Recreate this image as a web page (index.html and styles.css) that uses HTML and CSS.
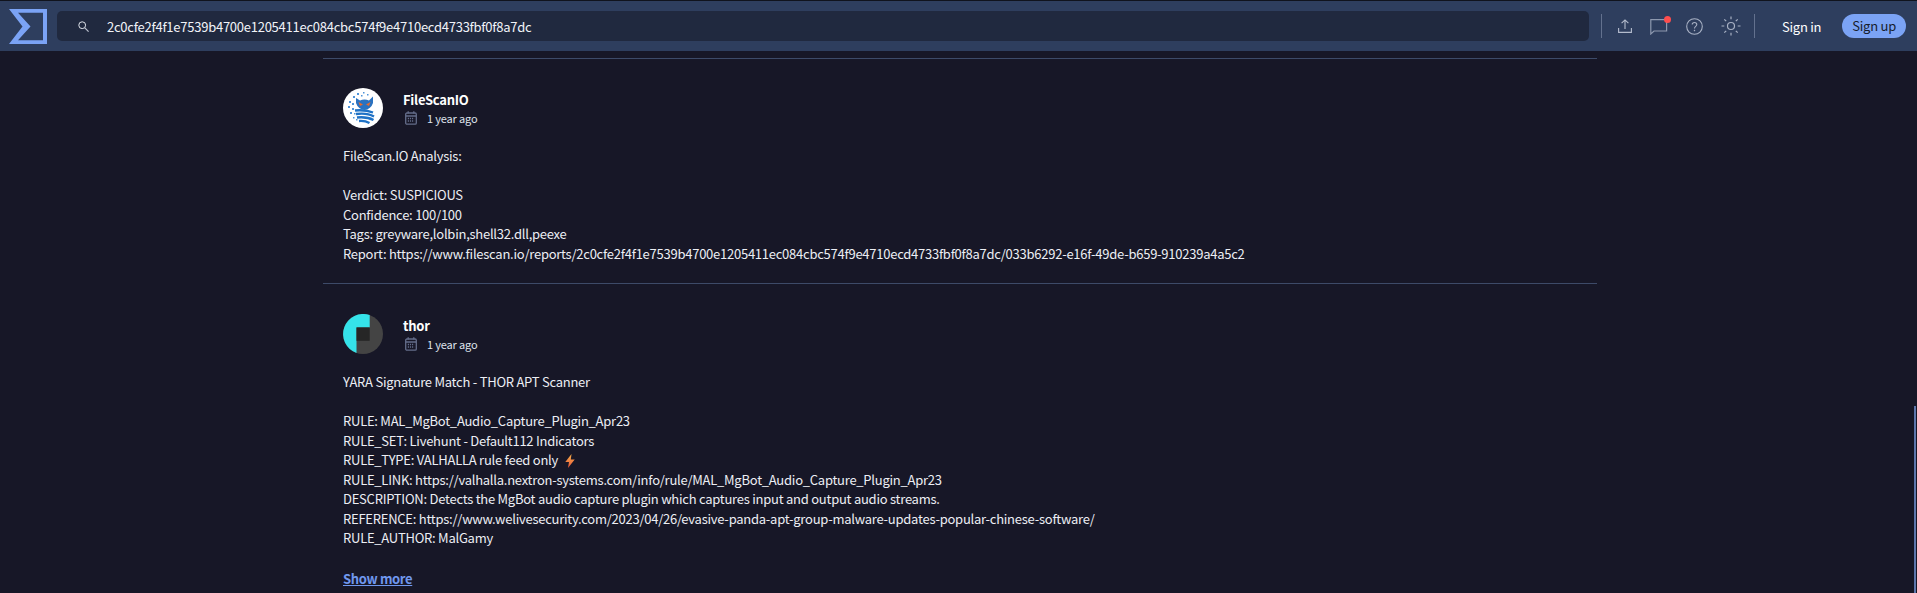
FILE: index.html
```html
<!DOCTYPE html>
<html lang="en">
<head>
    <meta charset="UTF-8">
    <title>VirusTotal</title>
    <link rel="stylesheet" href="styles.css">
</head>
<body>
    <header class="topbar">
        <svg class="logo" viewBox="0 0 38 35" width="38" height="35">
            <path fill-rule="evenodd" d="M0 0 H38 V35 H0 L13.5 17.5 Z M9 3.7 L21.5 17.5 L9 31.3 H34 V3.7 Z" fill="#7ba3f5"/>
        </svg>
        <div class="search">
            <svg class="search-icon" viewBox="0 0 11 11" width="11" height="11">
                <circle cx="4.2" cy="4.2" r="3.4" fill="none" stroke="#dfe3ea" stroke-width="1"/>
                <path d="M6.8 6.8 L10.6 10.6" stroke="#b9bfcc" stroke-width="1.2"/>
            </svg>
            <span class="search-text">2c0cfe2f4f1e7539b4700e1205411ec084cbc574f9e4710ecd4733fbf0f8a7dc</span>
        </div>
        <div class="divider"></div>
        <div class="tools">
            <svg viewBox="0 0 14 14" width="14" height="14" fill="none" stroke="#b4bccd" stroke-width="1.1">
                <path d="M7 10 V1 M3.6 4.2 L7 .9 L10.4 4.2 M.6 9 V13.4 H13.4 V9"/>
            </svg>
            <div class="chat">
                <svg viewBox="0 0 18 17" width="18" height="17" fill="none" stroke="#8d98ae" stroke-width="1.2">
                    <path d="M.8 1.6 H16.6 V13 H4 L.8 16 Z"/>
                </svg>
                <span class="dot"></span>
            </div>
            <svg viewBox="0 0 17 17" width="17" height="17" fill="none" stroke="#a8b1c4" stroke-width="1.1">
                <circle cx="8.5" cy="8.5" r="7.8"/>
                <path d="M6.2 6.6 C6.2 3.8 10.8 3.8 10.8 6.6 C10.8 8.4 8.5 8.4 8.5 10.4"/>
                <path d="M8.5 11.8 V13.2" stroke-width="1.3"/>
            </svg>
            <svg viewBox="0 0 20 20" width="20" height="20" fill="none" stroke="#a8b1c4" stroke-width="1.2">
                <circle cx="10" cy="10" r="3.5"/>
                <path d="M10 .5 V3.3 M10 16.7 V19.5 M.5 10 H3.3 M16.7 10 H19.5 M3.3 3.3 L5.2 5.2 M14.8 14.8 L16.7 16.7 M3.3 16.7 L5.2 14.8 M14.8 5.2 L16.7 3.3"/>
            </svg>
        </div>
        <div class="divider divider-right"></div>
        <a class="signin">Sign in</a>
        <a class="signup">Sign up</a>
    </header>

    <main class="comments">
        <article class="comment comment-first">
            <div class="comment-head">
                <svg class="avatar" viewBox="0 0 40 40" width="40" height="40">
                    <circle cx="20" cy="20" r="20" fill="#fff"/>
                    <path d="M13 10 L17 12.5 Q21.5 10.5 26 12.5 L30 8.5 L30 15 Q28 21 21.5 22 Q15 21 13 15 Z" fill="#2a72c0"/>
                    <path d="M15.5 14 L20 16.5 L17 18 Z M27.5 14 L23 16.5 L26 18 Z" fill="#ea6a2e"/>
                    <path d="M12 22.5 Q22 21.5 30 24.5 M13 26 Q24 24.5 31 28.5 M14 29.5 Q24 28.5 30.5 32 M16 33 Q22 32.5 26.5 35" fill="none" stroke="#1f72c6" stroke-width="2.4"/>
                    <path d="M10 8 h2 v2 h-2 z M6 13 h2 v2 h-2 z M9 15 h2 v2 h-2 z M5 18 h2 v2 h-2 z M9 20 h2 v2 h-2 z M7 24 h2 v2 h-2 z M11 25 h1.5 v1.5 h-1.5 z M10 29 h1.5 v1.5 h-1.5 z M13 31 h1.5 v1.5 h-1.5 z M14 5 h2 v2 h-2 z M18 7 h1.5 v1.5 h-1.5 z M20 4 h1.5 v1.5 h-1.5 z M24 6 h1.5 v1.5 h-1.5 z" fill="#4f93d8"/>
                </svg>
                <div class="meta">
                    <div class="author">FileScanIO</div>
                    <div class="date">
                        <svg viewBox="0 0 12 14" width="12" height="14" fill="none" stroke="#646d8a" stroke-width="1.3">
                            <rect x=".7" y="2" width="10.6" height="11.2" rx="1.2"/>
                            <path d="M.7 5 H11.3 M3.2 .3 V2.5 M8.8 .3 V2.5"/>
                            <path d="M2.8 7.5 H9.2 M2.8 10 H9.2" stroke-dasharray="1.2 .9"/>
                        </svg>
                        <span>1 year ago</span>
                    </div>
                </div>
            </div>
            <div class="comment-body">
                <p>FileScan.IO Analysis:</p>
                <p class="blank"></p>
                <p>Verdict: SUSPICIOUS</p>
                <p>Confidence: 100/100</p>
                <p>Tags: greyware,lolbin,shell32.dll,peexe</p>
                <p>Report: https://www.filescan.io/reports/2c0cfe2f4f1e7539b4700e1205411ec084cbc574f9e4710ecd4733fbf0f8a7dc/033b6292-e16f-49de-b659-910239a4a5c2</p>
            </div>
        </article>

        <article class="comment">
            <div class="comment-head">
                <svg class="avatar" viewBox="0 0 40 40" width="40" height="40">
                    <circle cx="20" cy="20" r="20" fill="#444"/>
                    <path d="M26.7 1.1 A20 20 0 0 0 13.5 38.9 V13.4 H26.7 Z" fill="#35e3ea"/>
                    <rect x="13.5" y="13.4" width="13.2" height="13.4" fill="#262626"/>
                </svg>
                <div class="meta">
                    <div class="author">thor</div>
                    <div class="date">
                        <svg viewBox="0 0 12 14" width="12" height="14" fill="none" stroke="#646d8a" stroke-width="1.3">
                            <rect x=".7" y="2" width="10.6" height="11.2" rx="1.2"/>
                            <path d="M.7 5 H11.3 M3.2 .3 V2.5 M8.8 .3 V2.5"/>
                            <path d="M2.8 7.5 H9.2 M2.8 10 H9.2" stroke-dasharray="1.2 .9"/>
                        </svg>
                        <span>1 year ago</span>
                    </div>
                </div>
            </div>
            <div class="comment-body">
                <p>YARA Signature Match - THOR APT Scanner</p>
                <p class="blank"></p>
                <p>RULE: MAL_MgBot_Audio_Capture_Plugin_Apr23</p>
                <p>RULE_SET: Livehunt - Default112 Indicators</p>
                <p>RULE_TYPE: VALHALLA rule feed only <svg class="bolt" viewBox="0 0 10 14" width="10" height="14"><defs><linearGradient id="boltFill" x1="0" y1="0" x2="0" y2="1"><stop offset="0" stop-color="#f7b24a"/><stop offset="1" stop-color="#e8553a"/></linearGradient></defs><path d="M6.5 0 L0.3 8 H4 L3 14 L9.7 5.5 H5.8 Z" fill="url(#boltFill)"/></svg></p>
                <p>RULE_LINK: https://valhalla.nextron-systems.com/info/rule/MAL_MgBot_Audio_Capture_Plugin_Apr23</p>
                <p>DESCRIPTION: Detects the MgBot audio capture plugin which captures input and output audio streams.</p>
                <p>REFERENCE: https://www.welivesecurity.com/2023/04/26/evasive-panda-apt-group-malware-updates-popular-chinese-software/</p>
                <p>RULE_AUTHOR: MalGamy</p>
                <a class="show-more">Show more</a>
            </div>
        </article>
    </main>

    <div class="scroll-thumb"></div>
</body>
</html>
```

FILE: styles.css
```css
* {
    box-sizing: border-box;
    margin: 0;
    padding: 0;
}
body {
    background: #171727;
    color: #eceef4;
    font-family: "Noto Sans CJK JP", "Noto Sans", sans-serif;
    font-size: 13px;
    letter-spacing: -0.25px;
    height: 593px;
    overflow: hidden;
}
.topbar {
    display: flex;
    align-items: center;
    height: 51px;
    background: #2e3e5e;
    border-top: 1px solid #10131d;
    padding-left: 9px;
}
.logo {
    flex: none;
    margin-right: 10px;
}
.search {
    flex: none;
    display: flex;
    align-items: center;
    width: 1532px;
    height: 30px;
    background: #20293f;
    border-radius: 5px;
    padding-left: 21px;
}
.search-icon {
    margin-right: 18px;
}
.search-text {
    color: #f1f3f8;
}
.divider {
    flex: none;
    width: 1px;
    height: 24px;
    background: #63718e;
    margin-left: 12px;
}
.tools {
    display: flex;
    align-items: center;
    gap: 18px;
    margin-left: 16px;
}
.chat {
    position: relative;
    height: 17px;
}
.dot {
    position: absolute;
    top: -2px;
    right: -3px;
    width: 7px;
    height: 7px;
    border-radius: 50%;
    background: #ff4d4d;
}
.divider-right {
    margin-left: 13px;
}
.signin {
    color: #fff;
    margin-left: 27px;
    white-space: nowrap;
}
.signup {
    background: #7ba3f5;
    color: #171d2c;
    height: 24px;
    line-height: 23px;
    padding: 0 10px;
    border-radius: 12px;
    margin-left: 21px;
    white-space: nowrap;
}
.comments {
    width: 1274px;
    margin-left: 323px;
    margin-top: 7px;
}
.comment {
    border-top: 1px solid #3d4a68;
    padding: 30px 20px 20px;
    height: 226px;
}
.comment-first {
    padding-top: 29px;
    height: 225px;
}
.comment-head {
    display: flex;
    align-items: flex-start;
    margin-bottom: 18px;
}
.avatar {
    flex: none;
    margin-right: 20px;
}
.author {
    font-weight: 700;
    color: #fff;
    line-height: 20px;
    margin-top: 2px;
}
.date {
    display: flex;
    align-items: center;
    gap: 10px;
    font-size: 11px;
    letter-spacing: -0.15px;
    padding-left: 2px;
    color: #dfe3ec;
}
.comment-body p {
    line-height: 19.5px;
    height: 19.5px;
}
.bolt {
    vertical-align: -3px;
    margin-left: 4px;
}
.show-more {
    display: block;
    margin-top: 21px;
    color: #7098ee;
    font-weight: 700;
    letter-spacing: -0.35px;
    text-decoration: underline;
    line-height: 20px;
}
.scroll-thumb {
    position: absolute;
    top: 406px;
    right: 1px;
    width: 2px;
    height: 187px;
    background: #5d76ab;
}
```
